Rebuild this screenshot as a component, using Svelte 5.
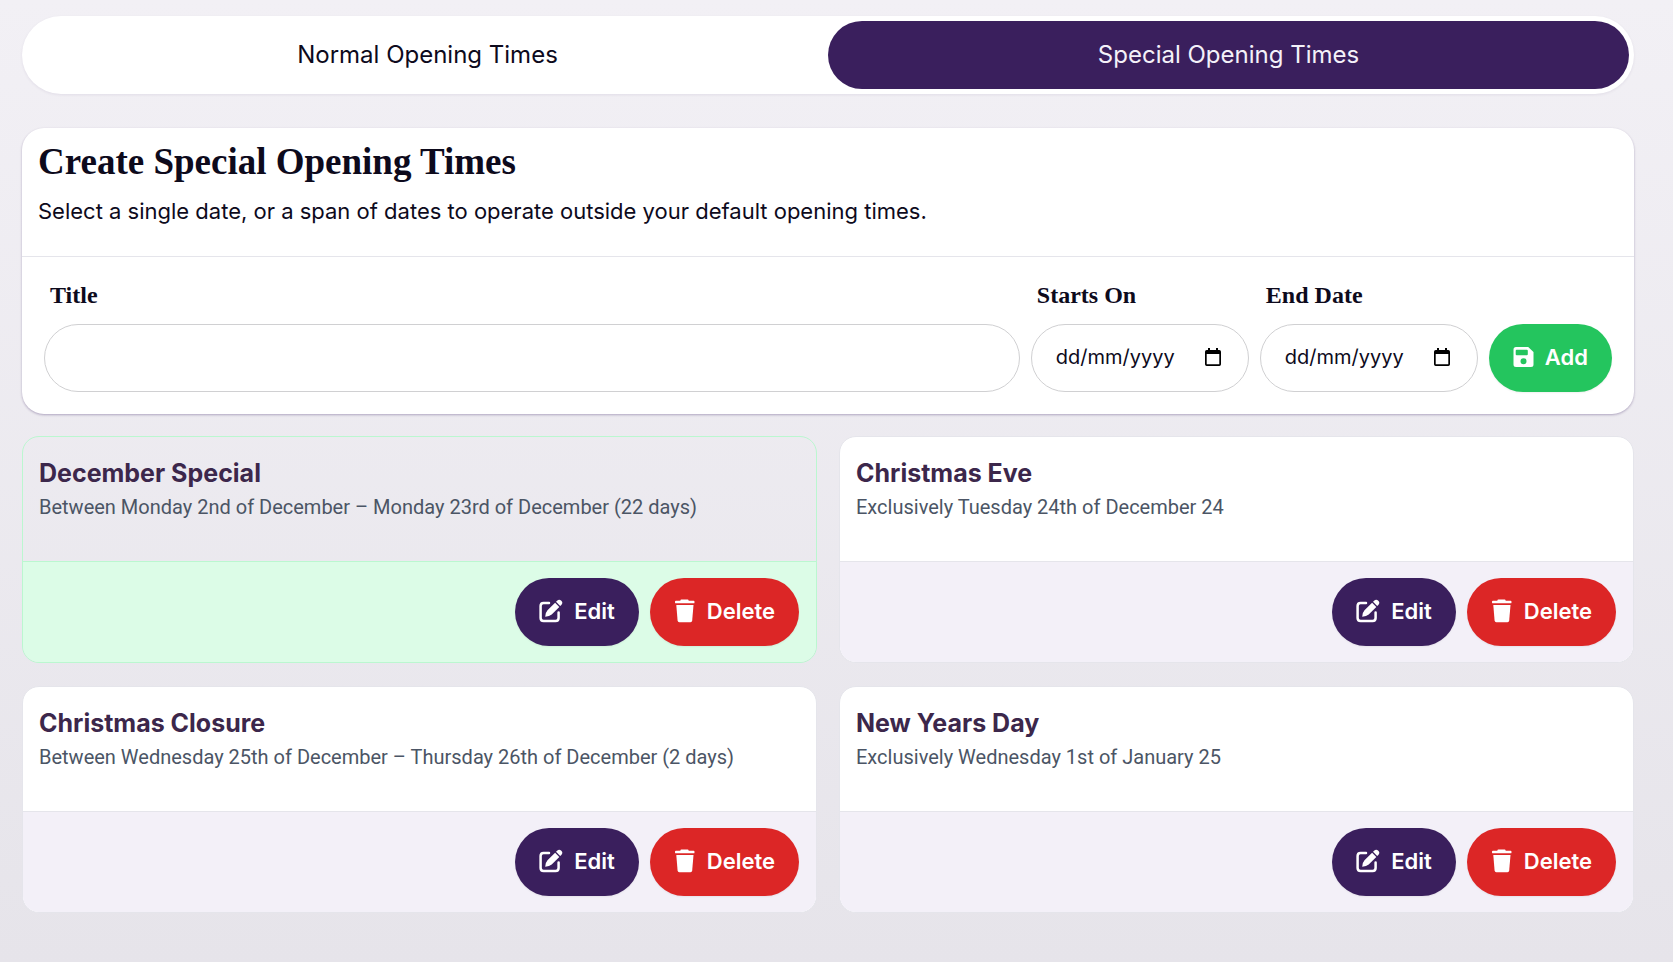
<script>
  let active = $state('special');
  let title = $state('');
  let startsOn = $state('');
  let endDate = $state('');

  const tabs = [
    { id: 'normal', label: 'Normal Opening Times' },
    { id: 'special', label: 'Special Opening Times' }
  ];

  const entries = [
    { name: 'December Special', when: 'Between Monday 2nd of December – Monday 23rd of December (22 days)', current: true },
    { name: 'Christmas Eve', when: 'Exclusively Tuesday 24th of December 24' },
    { name: 'Christmas Closure', when: 'Between Wednesday 25th of December – Thursday 26th of December (2 days)' },
    { name: 'New Years Day', when: 'Exclusively Wednesday 1st of January 25' }
  ];
</script>

{#snippet calendar()}
  <svg class="calendar" viewBox="0 0 16 18" width="16" height="18" aria-hidden="true">
    <path fill="#000" fill-rule="evenodd" d="M3 0h2v2h6V0h2v2h1.300q1.700 0 1.700 1.700v12.600q0 1.700-1.700 1.700H1.700Q0 18 0 16.300V3.700Q0 2 1.700 2H3zM1.700 6v10.300h12.600V6z" />
  </svg>
{/snippet}

<main>
  <nav aria-label="Opening times">
    {#each tabs as tab}
      <button type="button" class="tab" class:active={active === tab.id} onclick={() => (active = tab.id)}>{tab.label}</button>
    {/each}
  </nav>

  <section class="create">
    <header>
      <h1>Create Special Opening Times</h1>
      <p>Select a single date, or a span of dates to operate outside your default opening times.</p>
    </header>
    <form onsubmit={(e) => e.preventDefault()}>
      <div class="field grow">
        <label for="title">Title</label>
        <div class="box"><input id="title" type="text" bind:value={title} /></div>
      </div>
      <div class="field">
        <label for="starts">Starts On</label>
        <div class="box date"><input id="starts" type="text" placeholder="dd/mm/yyyy" bind:value={startsOn} />{@render calendar()}</div>
      </div>
      <div class="field">
        <label for="ends">End Date</label>
        <div class="box date"><input id="ends" type="text" placeholder="dd/mm/yyyy" bind:value={endDate} />{@render calendar()}</div>
      </div>
      <button type="submit" class="btn add">
        <svg viewBox="0 0 21 24" width="21" height="24" aria-hidden="true">
          <path fill="currentColor" fill-rule="evenodd" d="M3 2h12.200l5.300 5v12.500q0 2.500-2.500 2.500H3q-2.500 0-2.500-2.500v-15Q.5 2 3 2zm.7 2.700q-1 0-1 1v3.600q0 1 1 1h10.100q1 0 1-1V5.700q0-1-1-1zM10.500 13.200a3 3 0 1 0 0 6 3 3 0 0 0 0-6z" />
        </svg>
        Add
      </button>
    </form>
  </section>

  <div class="entries">
    {#each entries as entry}
      <article class:current={entry.current}>
        <div class="info">
          <h2>{entry.name}</h2>
          <p>{entry.when}</p>
        </div>
        <footer>
          <button type="button" class="btn edit">
            <svg viewBox="0 0 24 24" width="24" height="24" aria-hidden="true">
              <path fill="none" stroke="currentColor" stroke-width="2.500" stroke-linecap="round" d="M10 4H4.500Q1.600 4 1.600 7v12q0 3 3 3h12q3 0 3-3v-5.500" />
              <path fill="currentColor" d="M6.200 17.800q.2-4.300 2.300-6.500l7.600-7.600 4.200 4.200-7.600 7.600q-2.200 2.100-6.500 2.300z" />
              <path fill="currentColor" d="M17 2.800l1.100-1.100a2.950 2.950 0 0 1 4.200 4.200L21.200 7z" />
            </svg>
            Edit
          </button>
          <button type="button" class="btn delete">
            <svg viewBox="0 0 22 24" width="22" height="24" aria-hidden="true">
              <path fill="currentColor" d="M7.300.600h6.400q.8 0 1 1.200h4.900q.9 0 .9 1v.6q0 .9-.9.900H1.900q-.9 0-.9-.9v-.6q0-1 .9-1h4.400q.2-1.200 1-1.200z" />
              <path fill="currentColor" d="M2.300 6h17.200l-1.300 15.500q-.2 1.700-1.700 1.700H5.300q-1.500 0-1.700-1.700z" />
            </svg>
            Delete
          </button>
        </footer>
      </article>
    {/each}
  </div>
</main>

<style>
  :global(body) {
    background: linear-gradient(#f2f0f5, #e6e4ea) fixed;
  }

  main {
    padding: 16px 39px 48px 22px;
    font-family: Inter, "Liberation Sans", sans-serif;
    color: #0d0a1c;
  }

  h1, h2, p { margin: 0; }

  button, input { font: inherit; color: inherit; }

  nav {
    display: flex;
    padding: 5px;
    border-radius: 39px;
    background: #fff;
    box-shadow: 0 1px 3px rgba(56, 30, 93, 0.08);
  }

  .tab {
    flex: 1;
    height: 68px;
    padding: 0 24px 2px;
    border: 0;
    border-radius: 34px;
    background: none;
    font-size: 24px;
    cursor: pointer;
  }

  .tab.active {
    background: #3a1f5d;
    color: #f4f1f9;
  }

  .create {
    margin-top: 34px;
    border-radius: 22px;
    background: #fff;
    box-shadow: 0 1px 3px rgba(56, 30, 93, 0.15), 0 1px 2px rgba(56, 30, 93, 0.2);
  }

  header {
    padding: 14px 16px 30px;
    border-bottom: 1px solid #e5e5eb;
  }

  h1 {
    font: bold 37px/40px "Liberation Serif", serif;
  }

  header p {
    margin-top: 14px;
    font-size: 22px;
    line-height: 30px;
  }

  form {
    display: flex;
    align-items: flex-end;
    gap: 11px;
    padding: 22px;
  }

  .field {
    display: flex;
    flex-direction: column;
    gap: 13px;
  }

  .grow { flex: 1; }

  label {
    padding-left: 6px;
    font: bold 24px/32px "Liberation Serif", serif;
  }

  .box {
    display: flex;
    align-items: center;
    box-sizing: border-box;
    height: 68px;
    padding: 0 24px 2px;
    border: 1px solid #d0d0d2;
    border-radius: 34px;
  }

  .date { width: 218px; }

  input {
    flex: 1;
    min-width: 0;
    padding: 0;
    border: 0;
    outline: 0;
    background: none;
    font-size: 20px;
  }

  input::placeholder {
    color: #0d0a1c;
    opacity: 1;
  }

  .calendar { margin-right: 3px; }

  .btn {
    display: flex;
    align-items: center;
    gap: 11px;
    height: 68px;
    padding: 0 24px 2px;
    border: 0;
    border-radius: 34px;
    color: #fff;
    font-size: 22px;
    font-weight: 600;
    box-shadow: 0 1px 2px rgba(0, 0, 0, 0.06);
    cursor: pointer;
  }

  .add { background: #24c55e; }
  .edit { background: #3a1f5d; }
  .delete { background: #dc2626; }

  .entries {
    display: grid;
    grid-template-columns: 1fr 1fr;
    gap: 23px 22px;
    margin-top: 22px;
  }

  article {
    overflow: hidden;
    border: 1px solid #e5e5eb;
    border-radius: 17px;
    background: #fff;
  }

  .info {
    padding: 19px 16px 39px;
  }

  h2 {
    color: #3c274b;
    font-size: 25px;
    font-weight: 700;
    line-height: 34px;
  }

  .info p {
    margin-top: 2px;
    color: #4b5565;
    font-family: Roboto, "Liberation Sans", sans-serif;
    font-size: 20px;
    line-height: 30px;
  }

  footer {
    display: flex;
    justify-content: flex-end;
    gap: 11px;
    padding: 16px 17px 16px 16px;
    border-top: 1px solid #e5e5eb;
    background: #f3f0f8;
  }

  .current {
    border-color: #bbf7d0;
    background: none;
  }

  .current footer {
    border-color: #bbf7d0;
    background: #dcfce7;
  }
</style>
